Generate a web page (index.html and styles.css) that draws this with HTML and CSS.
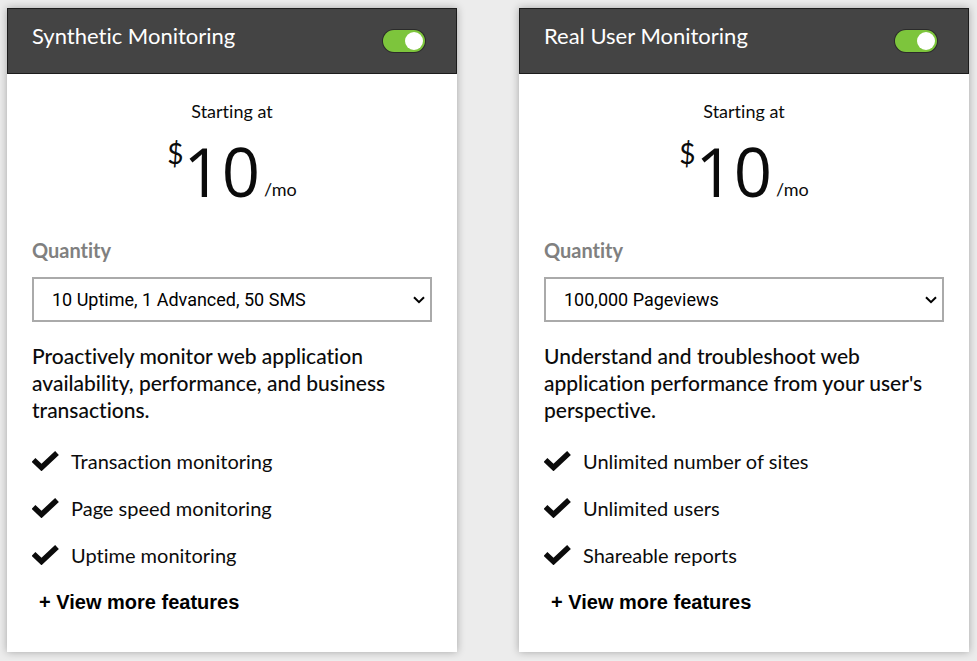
FILE: index.html
```html
<!DOCTYPE html>
<html lang="en">
<head>
<meta charset="utf-8">
<meta name="viewport" content="width=device-width, initial-scale=1">
<title>Monitoring plans</title>
<link rel="stylesheet" href="styles.css">
</head>
<body>
<svg class="sprite" aria-hidden="true">
  <symbol id="check" viewBox="0 0 28 20">
    <path d="M1.500 9L9.500 16.500L25 2" fill="none" stroke="currentColor" stroke-width="5.500"/>
  </symbol>
  <symbol id="chevron" viewBox="0 0 12 8">
    <path d="M1 1.200L6 6.200L11 1.200" fill="none" stroke="currentColor" stroke-width="2"/>
  </symbol>
</svg>
<main class="plans">
  <section class="card">
    <header class="card-header">
      <h2 class="card-title"><label for="synthetic">Synthetic Monitoring</label></h2>
      <input class="toggle" type="checkbox" id="synthetic" checked>
    </header>
    <div class="card-body">
      <p class="starting">Starting at</p>
      <p class="price"><span class="currency">$</span><span class="amount">10</span><span class="period">/mo</span></p>
      <label class="quantity-label" for="synthetic-quantity">Quantity</label>
      <div class="quantity-box">
        <select class="quantity" id="synthetic-quantity">
          <option>10 Uptime, 1 Advanced, 50 SMS</option>
        </select>
        <svg class="chevron" aria-hidden="true"><use href="#chevron"/></svg>
      </div>
      <p class="summary">Proactively monitor web application availability, performance, and business transactions.</p>
      <ul class="features">
        <li><svg class="check"><use href="#check"/></svg>Transaction monitoring</li>
        <li><svg class="check"><use href="#check"/></svg>Page speed monitoring</li>
        <li><svg class="check"><use href="#check"/></svg>Uptime monitoring</li>
      </ul>
      <button class="more" type="button">+ View more features</button>
    </div>
  </section>
  <section class="card">
    <header class="card-header">
      <h2 class="card-title"><label for="rum">Real User Monitoring</label></h2>
      <input class="toggle" type="checkbox" id="rum" checked>
    </header>
    <div class="card-body">
      <p class="starting">Starting at</p>
      <p class="price"><span class="currency">$</span><span class="amount">10</span><span class="period">/mo</span></p>
      <label class="quantity-label" for="rum-quantity">Quantity</label>
      <div class="quantity-box">
        <select class="quantity" id="rum-quantity">
          <option>100,000 Pageviews</option>
        </select>
        <svg class="chevron" aria-hidden="true"><use href="#chevron"/></svg>
      </div>
      <p class="summary">Understand and troubleshoot web application performance from your user's perspective.</p>
      <ul class="features">
        <li><svg class="check"><use href="#check"/></svg>Unlimited number of sites</li>
        <li><svg class="check"><use href="#check"/></svg>Unlimited users</li>
        <li><svg class="check"><use href="#check"/></svg>Shareable reports</li>
      </ul>
      <button class="more" type="button">+ View more features</button>
    </div>
  </section>
</main>
</body>
</html>
```

FILE: styles.css
```css
* {
  box-sizing: border-box;
}

body {
  margin: 0;
  background: #ececec;
  color: #0b0b0b;
  font-family: Lato, sans-serif;
  font-size: 20px;
  font-variant-ligatures: none;
}

h2, p, ul {
  margin: 0;
  padding: 0;
}

.sprite {
  display: none;
}

.plans {
  display: grid;
  grid-template-columns: 1fr 1fr;
  gap: 62px;
  padding: 8px 8px 8px 7px;
}

.card {
  background: #fff;
  box-shadow: 0 0 8px rgba(0, 0, 0, 0.3);
}

.card-header {
  display: flex;
  justify-content: space-between;
  align-items: center;
  height: 66px;
  padding: 0 31px 0 24px;
  border: 1px solid #1c1c1c;
  background: #444;
  color: #fff;
}

.card-title {
  padding-bottom: 10px;
  font-size: 22px;
  line-height: 28px;
  font-weight: 400;
}

.toggle {
  appearance: none;
  display: flex;
  justify-content: flex-end;
  align-items: center;
  width: 42px;
  height: 22px;
  margin: 0;
  padding: 2px;
  border-radius: 11px;
  background: #7dc53c;
  box-shadow: 0 0 0 1px #2b2b2b;
}

.toggle::before {
  content: "";
  width: 18px;
  height: 18px;
  border-radius: 50%;
  background: #fff;
}

.toggle:not(:checked) {
  justify-content: flex-start;
  background: #999;
}

.card-body {
  padding: 25px 25px 38px;
}

.starting {
  font-size: 18px;
  line-height: 24px;
  text-align: center;
}

.price {
  display: flex;
  justify-content: center;
  height: 96px;
}

.currency {
  font-size: 28px;
  line-height: 60px;
}

.amount {
  margin-right: 4px;
  font-family: "Open Sans", sans-serif;
  font-size: 67px;
  line-height: 96px;
}

.period {
  align-self: flex-end;
  margin-bottom: 18px;
  font-size: 18px;
  line-height: 24px;
}

.quantity-label {
  display: block;
  margin: 17px 0 13px;
  color: #808080;
  font-weight: 700;
  line-height: 28px;
}

.quantity-box {
  position: relative;
}

.quantity {
  appearance: none;
  display: block;
  width: 100%;
  height: 45px;
  padding: 0 18px;
  border: 2px solid #aaa;
  border-radius: 0;
  background-color: #fff;
  color: #000;
  font-family: Roboto, sans-serif;
  font-size: 18px;
}

.chevron {
  position: absolute;
  top: 19px;
  right: 7px;
  width: 12px;
  height: 8px;
  color: #000;
  pointer-events: none;
}

.summary {
  margin: 20px 0 24px;
  font-size: 21px;
  font-weight: 500;
  line-height: 27px;
}

.features {
  list-style: none;
}

.features li {
  display: flex;
  align-items: center;
  gap: 11px;
  margin-bottom: 19px;
  line-height: 28px;
}

.check {
  width: 28px;
  height: 20px;
}

.more {
  display: block;
  margin-top: 21px;
  padding: 0 7px;
  border: 0;
  background: none;
  color: #000;
  font-family: "Liberation Sans", sans-serif;
  font-size: 20px;
  font-weight: 700;
  line-height: 24px;
}
```
